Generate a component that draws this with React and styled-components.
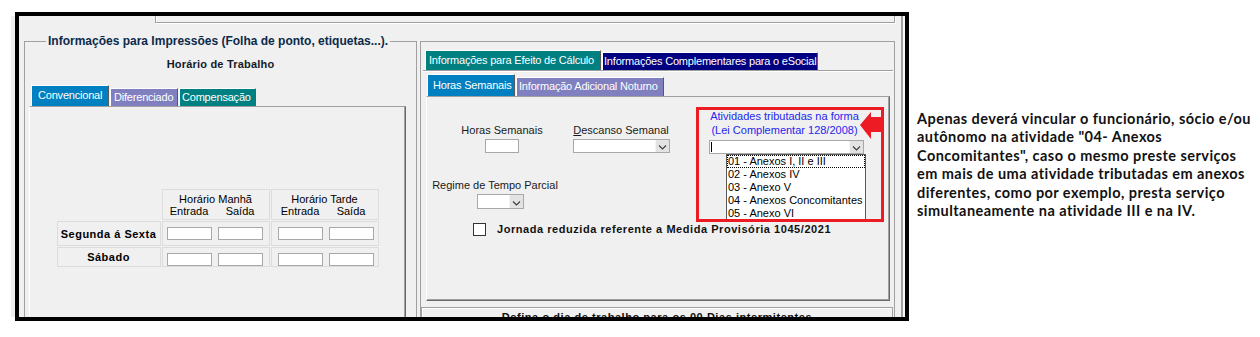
import React from "react";
import styled, { createGlobalStyle } from "styled-components";

const GlobalStyle = createGlobalStyle`
  html, body {
    margin: 0;
    padding: 0;
    background: #fff;
  }
  body {
    font-family: "Liberation Sans", Arial, sans-serif;
    font-size: 11px;
    color: #000;
  }
  * {
    box-sizing: border-box;
  }
`;

const leftTabs = [
  { label: "Convencional", bg: "#0080c0", w: 78, pad: 6, active: true },
  { label: "Diferenciado", bg: "#8080c0", w: 68, pad: 3 },
  { label: "Compensação", bg: "#008080", w: 77, pad: 2 },
];

const outerTabs = [
  { label: "Informações para Efeito de Cálculo", bg: "#008080", w: 176, pad: 3, active: true },
  { label: "Informações Complementares para o eSocial", bg: "#000080", w: 216, pad: 1 },
];

const innerTabs = [
  { label: "Horas Semanais", bg: "#0080c0", w: 88, pad: 5, active: true },
  { label: "Informação Adicional Noturno", bg: "#8080c0", w: 148, pad: 2 },
];

const anexos = [
  "01 - Anexos I, II e III",
  "02 - Anexos IV",
  "03 - Anexo V",
  "04 - Anexos Concomitantes",
  "05 - Anexo VI",
];

const noteLines = [
  "Apenas deverá vincular o funcionário, sócio e/ou",
  'autônomo na atividade "04- Anexos',
  'Concomitantes", caso o mesmo preste serviços',
  "em mais de uma atividade tributadas em anexos",
  "diferentes, como por exemplo, presta serviço",
  "simultaneamente na atividade III e na IV.",
];

function Chevron() {
  return (
    <svg width="9" height="5" viewBox="0 0 9 5">
      <polyline points="1,0.5 4.5,4 8,0.5" fill="none" stroke="#3c3c3c" strokeWidth="1.1" />
    </svg>
  );
}

function Combo({ width, height = 14, children }) {
  return (
    <ComboBox $w={width} $h={height}>
      <ComboField>{children}</ComboField>
      <ComboButton>
        <Chevron />
      </ComboButton>
    </ComboBox>
  );
}

function TabStrip({ tabs, activeH, idleH, offset, top = 0 }) {
  return (
    <Tabs $offset={offset} $top={top}>
      {tabs.map((t) => (
        <Tab key={t.label} $w={t.w} $h={t.active ? activeH : idleH} $bg={t.bg} $pad={t.pad}>
          {t.label}
        </Tab>
      ))}
    </Tabs>
  );
}

function TimeCell({ pad }) {
  return (
    <InputCell $pad={pad}>
      <TimeInput />
      <TimeInput />
    </InputCell>
  );
}

export default function App() {
  return (
    <>
      <GlobalStyle />
      <Page>
        <Frame>
          <Screen>
            <Main>
              <TopStrip />
              <Groups>
                <LeftGroup>
                  <Legend>Informações para Impressões (Folha de ponto, etiquetas...).</Legend>
                  <Heading>Horário de Trabalho</Heading>
                  <TabStrip tabs={leftTabs} activeH={21} idleH={18} offset={6} top={14} />
                  <LeftPanel>
                    <Schedule>
                      <HeaderCell $blank />
                      <HeaderCell>
                        <span>Horário Manhã</span>
                        <SubLabels $pad={5}>
                          <span>Entrada</span>
                          <span>Saída</span>
                        </SubLabels>
                      </HeaderCell>
                      <HeaderCell>
                        <span>Horário Tarde</span>
                        <SubLabels $pad={7}>
                          <span>Entrada</span>
                          <span>Saída</span>
                        </SubLabels>
                      </HeaderCell>

                      <DayCell>Segunda á Sexta</DayCell>
                      <TimeCell pad={5} />
                      <TimeCell pad={7} />

                      <DayCell>Sábado</DayCell>
                      <TimeCell pad={5} />
                      <TimeCell pad={7} />
                    </Schedule>
                  </LeftPanel>
                </LeftGroup>

                <RightGroup>
                  <TabStrip tabs={outerTabs} activeH={20} idleH={18} offset={4} />
                  <OuterPanel>
                    <TabStrip tabs={innerTabs} activeH={22} idleH={19} offset={4} />
                    <InnerPanel>
                      <FormRow>
                        <LeftCol>
                          <FieldRow $top={0} $left={35}>
                            <Field $w={80}>
                              <FieldLabel>Horas Semanais</FieldLabel>
                              <TextBox />
                            </Field>
                            <Field $w={98}>
                              <FieldLabel>
                                <u>D</u>escanso Semanal
                              </FieldLabel>
                              <Combo width={97} />
                            </Field>
                          </FieldRow>
                          <FieldRow $top={26} $left={7}>
                            <Field $w={122}>
                              <FieldLabel>Regime de Tempo Parcial</FieldLabel>
                              <ShiftBox>
                                <Combo width={47} height={15} />
                              </ShiftBox>
                            </Field>
                          </FieldRow>
                        </LeftCol>

                        <Atividades>
                          <BlueLabel>Atividades tributadas na forma</BlueLabel>
                          <BlueLabel>(Lei Complementar 128/2008)</BlueLabel>
                          <ComboSlot>
                            <Combo width={155}>
                              <Caret />
                            </Combo>
                          </ComboSlot>
                          <DropList>
                            {anexos.map((a, i) => (
                              <DropItem key={a} $focus={i === 0}>
                                {a}
                              </DropItem>
                            ))}
                          </DropList>
                          <Highlight />
                          <Arrow width="24" height="28" viewBox="0 0 24 28">
                            <polygon points="0,13 11,0 11,5 24,5 24,20 11,20 11,27" fill="#ed1c24" />
                          </Arrow>
                        </Atividades>
                      </FormRow>

                      <CheckRow>
                        <CheckBox />
                        <BoldText>Jornada reduzida referente a Medida Provisória 1045/2021</BoldText>
                      </CheckRow>
                    </InnerPanel>
                  </OuterPanel>
                  <LowerBox>
                    <BoldText>Defina o dia de trabalho para os 00 Dias intermitentes</BoldText>
                  </LowerBox>
                </RightGroup>
              </Groups>
            </Main>
            <EdgeBar />
          </Screen>
        </Frame>

        <Note>
          {noteLines.map((l) => (
            <span key={l}>{l}</span>
          ))}
        </Note>
      </Page>
    </>
  );
}

const Page = styled.div`
  display: flex;
  align-items: flex-start;
  width: 1260px;
  height: 337px;
  padding: 12px 0 0 15px;
  overflow: hidden;
`;

const Frame = styled.div`
  position: relative;
  flex: none;
  width: 894px;
  height: 309px;
  border: 4px solid #000;
  background: #f0f0f0;

  &::before {
    content: "";
    position: absolute;
    left: -8px;
    top: 0;
    bottom: 0;
    width: 4px;
    background: #eeeeee;
  }
`;

const Screen = styled.div`
  display: flex;
  width: 100%;
  height: 100%;
  overflow: hidden;
`;

const Main = styled.div`
  width: 882px;
  flex: none;
`;

const EdgeBar = styled.div`
  flex: none;
  width: 4px;
  border-left: 2px solid #a0a0a0;
  background: #f8f8f8;
`;

const TopStrip = styled.div`
  margin-left: 136px;
  width: 740px;
  height: 7px;
  border: 1px solid #a0a0a0;
  border-top: none;
  box-shadow: 1px 1px 0 #fff, inset 1px 0 0 #fff;
`;

const Groups = styled.div`
  display: flex;
  align-items: flex-start;
  margin-top: 11px;
`;

const LeftGroup = styled.fieldset`
  flex: none;
  width: 393px;
  height: 300px;
  margin: 0 0 0 5px;
  padding: 0;
  min-width: 0;
  border: 1px solid #a0a0a0;
`;

const Legend = styled.legend`
  margin-left: 21px;
  padding: 0 2px;
  font-weight: bold;
  font-size: 12px;
  line-height: 14px;
  color: #0b2a4a;
  white-space: nowrap;
`;

const Heading = styled.div`
  margin-top: 10px;
  text-align: center;
  font-weight: bold;
  line-height: 13px;
  letter-spacing: 0.2px;
  color: #151a28;
`;

const Tabs = styled.div`
  display: flex;
  align-items: flex-end;
  gap: 1px;
  margin-left: ${(p) => p.$offset}px;
  margin-top: ${(p) => p.$top}px;
`;

const Tab = styled.div`
  flex: none;
  width: ${(p) => p.$w}px;
  height: ${(p) => p.$h}px;
  line-height: ${(p) => p.$h - 2}px;
  padding-left: ${(p) => p.$pad}px;
  background: ${(p) => p.$bg};
  color: #fff;
  font-size: 11px;
  letter-spacing: -0.2px;
  white-space: nowrap;
  overflow: hidden;
  border-top: 1px solid #fff;
  border-left: 1px solid #fff;
  border-right: 1px solid #5a5a5a;
`;

const LeftPanel = styled.div`
  margin-left: 4px;
  width: 377px;
  height: 220px;
  padding-top: 82px;
  border-top: 1px solid #a0a0a0;
  border-left: 1px solid #fff;
  border-right: 1px solid #696969;
  box-shadow: inset -1px 0 0 #a0a0a0;
`;

const Schedule = styled.div`
  display: grid;
  grid-template-columns: 104px 108px 108px;
  grid-template-rows: 31px 25px 20px;
  gap: 1px;
  justify-content: center;
`;

const HeaderCell = styled.div`
  display: flex;
  flex-direction: column;
  justify-content: center;
  align-items: center;
  border: 1px solid ${(p) => (p.$blank ? "transparent" : "#dcdcdc")};
  line-height: 12px;
  white-space: nowrap;
`;

const SubLabels = styled.div`
  align-self: stretch;
  display: flex;
  gap: 6px;
  padding-left: ${(p) => p.$pad - 1}px;

  span {
    width: 45px;
    text-align: center;
  }
`;

const DayCell = styled.div`
  display: flex;
  align-items: center;
  justify-content: center;
  border: 1px solid #dcdcdc;
  font-weight: bold;
  letter-spacing: 0.5px;
  white-space: nowrap;
`;

const InputCell = styled.div`
  display: flex;
  gap: 6px;
  padding: 5px 0 0 ${(p) => p.$pad - 1}px;
  border: 1px solid #dcdcdc;
`;

const TimeInput = styled.div`
  width: 45px;
  height: 13px;
  background: #fff;
  border: 1px solid #a8a8a8;
`;

const RightGroup = styled.div`
  flex: none;
  width: 475px;
  height: 290px;
  margin: 7px 0 0 3px;
  padding-top: 8px;
  border: 1px solid #a0a0a0;
`;

const OuterPanel = styled.div`
  margin-left: 2px;
  width: 470px;
  padding: 3px 0 1px;
  border-top: 1px solid #a0a0a0;
  box-shadow: inset 0 1px 0 #fff;
`;

const InnerPanel = styled.div`
  margin-left: 3px;
  width: 464px;
  height: 205px;
  border-top: 1px solid #a0a0a0;
  border-left: 1px solid #fff;
  border-right: 1px solid #696969;
  border-bottom: 1px solid #696969;
  box-shadow: inset -1px -1px 0 #a0a0a0;
`;

const FormRow = styled.div`
  display: flex;
  align-items: flex-start;
`;

const LeftCol = styled.div`
  flex: none;
  width: 282px;
  padding-top: 27px;
`;

const FieldRow = styled.div`
  display: flex;
  gap: 30px;
  margin-top: ${(p) => p.$top}px;
  padding-left: ${(p) => p.$left}px;
`;

const Field = styled.div`
  display: flex;
  flex-direction: column;
  align-items: center;
  gap: 2px;
  width: ${(p) => p.$w}px;
`;

const FieldLabel = styled.div`
  line-height: 13px;
  white-space: nowrap;
  color: #1a1a1a;
`;

const TextBox = styled.div`
  width: 34px;
  height: 14px;
  background: #fff;
  border: 1px solid #a8a8a8;
`;

const ShiftBox = styled.div`
  margin-left: 11px;
`;

const ComboBox = styled.div`
  display: flex;
  width: ${(p) => p.$w}px;
  height: ${(p) => p.$h}px;
  background: #fff;
  border: 1px solid #a8a8a8;
`;

const ComboField = styled.div`
  flex: 1;
  position: relative;
`;

const Caret = styled.div`
  position: absolute;
  left: 1px;
  top: 1px;
  width: 1px;
  height: 10px;
  background: #000;
`;

const ComboButton = styled.div`
  flex: none;
  width: 14px;
  display: flex;
  align-items: flex-end;
  justify-content: center;
  padding-bottom: 2px;
  background: #e3e3e3;
  border-left: 1px solid #f4f4f4;
`;

const Atividades = styled.div`
  position: relative;
  flex: none;
  width: 155px;
  margin-top: 13px;
  display: flex;
  flex-direction: column;
  align-items: center;
`;

const ComboSlot = styled.div`
  margin-top: 3px;
`;

const BlueLabel = styled.div`
  line-height: 13.5px;
  color: #2626ee;
  white-space: nowrap;
  margin-right: 4px;
`;

const DropList = styled.div`
  position: absolute;
  left: 17px;
  top: 44px;
  width: 140px;
  background: #fff;
  border: 1px solid #5a5a5a;
  z-index: 2;
`;

const DropItem = styled.div`
  height: 13px;
  line-height: 12px;
  padding-left: 1px;
  white-space: nowrap;
  outline: ${(p) => (p.$focus ? "1px dotted #000" : "none")};
  outline-offset: -1px;
`;

const Highlight = styled.div`
  position: absolute;
  left: -13px;
  top: -3px;
  width: 188px;
  height: 115px;
  border: 3px solid #ed1c24;
  z-index: 3;
  pointer-events: none;
`;

const Arrow = styled.svg`
  position: absolute;
  left: 151px;
  top: 2px;
  z-index: 4;
`;

const CheckRow = styled.div`
  display: flex;
  align-items: center;
  gap: 11px;
  margin-top: 14px;
  padding-left: 46px;
`;

const CheckBox = styled.div`
  width: 13px;
  height: 13px;
  background: #fff;
  border: 1px solid #333;
`;

const BoldText = styled.span`
  font-weight: bold;
  line-height: 13px;
  letter-spacing: 0.55px;
  white-space: nowrap;
  color: #111;
`;

const LowerBox = styled.div`
  margin-top: 5px;
  width: 472px;
  height: 40px;
  padding-top: 3px;
  text-align: center;
  border: 1px solid #a0a0a0;
  border-bottom: none;
  box-shadow: inset 1px 1px 0 #fff;
`;

const Note = styled.div`
  display: flex;
  flex-direction: column;
  margin: 98px 0 0 8px;
  font-family: Lato, "Open Sans", sans-serif;
  font-weight: 700;
  font-size: 14.5px;
  letter-spacing: 0.45px;
  line-height: 18.4px;
  color: #111;
  white-space: nowrap;
`;
